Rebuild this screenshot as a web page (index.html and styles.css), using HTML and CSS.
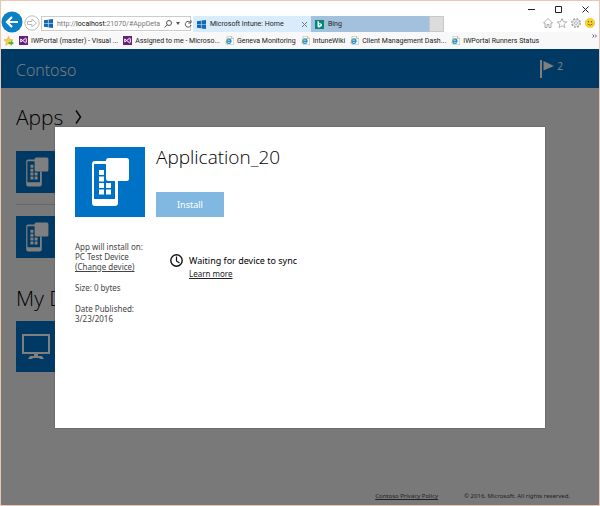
FILE: index.html
```html
<!DOCTYPE html>
<html lang="en">
<head>
<meta charset="utf-8">
<title>Microsoft Intune: Home</title>
<link rel="stylesheet" href="styles.css">
</head>
<body>
<svg class="defs" aria-hidden="true">
  <symbol id="win" viewBox="0 0 16 16"><path fill="#1468b3" d="M0 2.3 7 1.3V7.5H0zM8 1.1 16 0v7.5H8zM0 8.5h7v6.2L0 13.7zM8 8.5h8V16l-8-1.1z"/></symbol>
  <symbol id="vs" viewBox="0 0 18 18"><path fill="#68217a" d="M0 0h18v18H0z"/><path fill="none" stroke="#fff" stroke-width="2" d="M3.500 6v6L13 4.500l1.500.8v7.400l-1.500.8L3.500 6"/></symbol>
  <symbol id="ie" viewBox="0 0 18 18"><path fill="#fff" stroke="#999" d="M4 .5h9l4.500 4.500v12.500H4z"/><path fill="#e8e8e8" stroke="#999" d="M13 .5V5h4.500"/><path fill="none" stroke="#1c97dc" stroke-width="2.600" d="M3.500 10.500h8.500c0-6-8.500-6-8.500 0 0 5.500 6.500 5.500 8 2"/><path fill="none" stroke="#f2bd20" stroke-width="1.500" d="M2 15c-3-3 7-12 11-10"/></symbol>
  <symbol id="phone" viewBox="0 0 70 70"><path fill="#fff" fill-rule="evenodd" d="M20 14h12v3H19v35h21V34h3v22q0 3-3 3H20q-3 0-3-3V17q0-3 3-3z"/><rect x="31" y="11" width="23" height="23" rx="2.500" fill="#fff"/><path fill="#fff" d="M24 23h5v5h-5zM24 29.500h5v5h-5zM24 36h5v5h-5zM31 36h5v5h-5zM24 42.500h5v5h-5zM31 42.500h5v5h-5z"/></symbol>
</svg>

<header class="chrome">
  <div class="toolbar">
    <button class="nav" aria-label="Back"><svg width="22" height="22" viewBox="0 0 22 22"><circle cx="11" cy="11" r="10.500" fill="#0b80c4"/><path d="M17 11H6M11 6l-5 5 5 5" fill="none" stroke="#fff" stroke-width="2.200"/></svg></button>
    <button class="nav" aria-label="Forward"><svg width="16" height="16" viewBox="0 0 16 16"><circle cx="8" cy="8" r="7.200" fill="#fff" stroke="#bbb"/><path d="M3.500 6.500h4.500V4l4.500 4L8 12V9.500H3.500z" fill="none" stroke="#bbb"/></svg></button>
    <div class="address">
      <svg width="9" height="9"><use href="#win"/></svg>
      <span class="url">http://<b>localhost:</b>21070/#AppDeta</span>
      <button class="nav" aria-label="Search"><svg width="8" height="8" viewBox="0 0 8 8"><circle cx="5" cy="3" r="2.500" fill="none" stroke="#555"/><path d="M3.200 4.800.5 7.500" stroke="#555"/></svg></button>
      <button class="nav" aria-label="Show address list"><svg width="4" height="3"><path d="M0 0h4L2 3z" fill="#555"/></svg></button>
      <button class="nav" aria-label="Refresh"><svg width="8" height="8" viewBox="0 0 8 8"><path d="M6.500 2.500A2.900 2.900 0 1 0 7 5M7 .2v2.800H4.300" fill="none" stroke="#555"/></svg></button>
    </div>
    <nav class="tabs">
      <a class="tab active" href="#"><svg width="9" height="9"><use href="#win"/></svg><span>Microsoft Intune: Home</span><svg class="close" width="5" height="5"><path d="M0 0 5 5M5 0 0 5" stroke="#777"/></svg></a>
      <a class="tab" href="#"><svg width="9" height="9" viewBox="0 0 18 18"><path fill="#00897b" d="M0 0h18v18H0z"/><path fill="#fff" d="m5 2 3 1v8l3-1.300-2-1-1-3 6 2.500v3.300L8 15.500l-3-2z"/></svg><span>Bing</span></a>
      <button class="newtab" aria-label="New tab"></button>
    </nav>
    <div class="right">
      <div class="window">
        <button class="nav" aria-label="Minimize"><svg width="7" height="7"><path d="M0 3.500h7" stroke="#222"/></svg></button>
        <button class="nav" aria-label="Maximize"><svg width="7" height="7"><path d="M.5.5h6v6h-6z" fill="none" stroke="#222"/></svg></button>
        <button class="nav" aria-label="Close"><svg width="7" height="7"><path d="M.5.5l6 6M6.500.5l-6 6" stroke="#222"/></svg></button>
      </div>
      <div class="tools">
        <button class="nav" aria-label="Home"><svg width="10" height="10" viewBox="0 0 20 20"><path d="M1 10 10 1l9 9h-3v9h-4v-6H8v6H4v-9z" fill="none" stroke="#999" stroke-width="1.600"/></svg></button>
        <button class="nav" aria-label="Favorites"><svg width="10" height="10" viewBox="0 0 20 20"><path d="m10 1 2.700 6.300 6.800.6-5.100 4.500 1.500 6.700-5.900-3.500-5.900 3.500 1.500-6.700L.5 7.900l6.800-.6z" fill="none" stroke="#999" stroke-width="1.500"/></svg></button>
        <button class="nav" aria-label="Settings"><svg width="10" height="10" viewBox="0 0 20 20"><circle cx="10" cy="10" r="8.500" fill="none" stroke="#999" stroke-width="2.500" stroke-dasharray="4 2.670"/><circle cx="10" cy="10" r="6.500" fill="#fff" stroke="#999"/><circle cx="10" cy="10" r="3" fill="none" stroke="#999" stroke-width="1.500"/></svg></button>
        <button class="nav" aria-label="Feedback"><svg width="10" height="10" viewBox="0 0 20 20"><circle cx="10" cy="10" r="9.500" fill="#fbd32e" stroke="#e3b51c"/><circle cx="7" cy="7.500" r="1.500" fill="#765a12"/><circle cx="13" cy="7.500" r="1.500" fill="#765a12"/><path d="M5 12q5 5 10 0" fill="none" stroke="#765a12" stroke-width="1.500"/></svg></button>
      </div>
    </div>
  </div>
  <nav class="favorites">
    <button class="nav" aria-label="Add to favorites bar"><svg width="10" height="10" viewBox="0 0 20 20"><path d="m9 1 2.700 6 6.300.6-4.800 4.400 1.400 6.500L9 15l-5.600 3.500L4.800 12 0 7.600 6.300 7z" fill="#fbcf4a" stroke="#dc9b20"/><path d="M9 12h5V9l6 5-6 5v-3H9z" fill="#55b430"/></svg></button>
    <a href="#"><svg width="9" height="9"><use href="#vs"/></svg>IWPortal (master) - Visual ...</a>
    <a href="#"><svg width="9" height="9"><use href="#vs"/></svg>Assigned to me - Microso...</a>
    <a href="#"><svg width="9" height="9"><use href="#ie"/></svg>Geneva Monitoring</a>
    <a href="#"><svg width="9" height="9"><use href="#ie"/></svg>IntuneWiki</a>
    <a href="#"><svg width="9" height="9"><use href="#ie"/></svg>Client Management Dash...</a>
    <a href="#"><svg width="9" height="9"><use href="#ie"/></svg>IWPortal Runners Status</a>
    <button class="nav more" aria-label="More favorites"><svg width="5" height="4"><path d="m.5.5 1.500 1.500L.5 3.500M3 .5 4.500 2 3 3.500" fill="none" stroke="#5c5ca0"/></svg></button>
  </nav>
</header>

<div class="site">
  <div class="banner">
    <span class="brand">Contoso</span>
    <a class="flag" href="#" aria-label="2 notifications"><svg width="14" height="18" viewBox="0 0 14 18"><path fill="#fff" d="M0 0h2v18H0zM3.500 1 14 6 3.500 10.500z"/></svg><span>2</span></a>
  </div>
  <main class="content">
    <h1>Apps <svg width="7" height="14" viewBox="0 0 7 14"><path d="m1 .5 4.500 6.500L1 13.500" fill="none" stroke="#111" stroke-width="1.500"/></svg></h1>
    <ul class="apps">
      <li><a class="tile" href="#" aria-label="App"><svg width="42" height="42"><use href="#phone"/></svg></a></li>
      <li><a class="tile" href="#" aria-label="App"><svg width="42" height="42"><use href="#phone"/></svg></a></li>
    </ul>
    <h1>My Devices</h1>
    <a class="tile device" href="#" aria-label="PC Test Device"><svg width="28" height="26" viewBox="0 0 28 26"><path d="M1 1h26v18H1z" fill="none" stroke="#fff" stroke-width="2"/><path fill="#fff" d="M12 20h4v2h4l2 3h-4l-1-1h-6l-1 1H6l2-3h4z"/></svg></a>
  </main>
  <footer class="footer"><a href="#">Contoso Privacy Policy</a><span>© 2016. Microsoft. All rights reserved.</span></footer>

  <div class="overlay">
    <section class="dialog" role="dialog" aria-labelledby="app-name">
      <div class="summary">
        <svg class="logo" width="70" height="70"><use href="#phone"/></svg>
        <p>App will install on:<br>PC Test Device<br><a href="#">(Change device)</a></p>
        <p>Size: 0 bytes</p>
        <p>Date Published:<br>3/23/2016</p>
      </div>
      <div class="detail">
        <h2 id="app-name">Application_20</h2>
        <button class="install">Install</button>
        <div class="status">
          <svg width="13" height="13" viewBox="0 0 13 13"><circle cx="6.500" cy="6.500" r="5.700" fill="none" stroke="#111" stroke-width="1.400"/><path d="M6.500 2.500V7l3 2" fill="none" stroke="#111" stroke-width="1.200"/></svg>
          <div><span class="message">Waiting for device to sync</span><a href="#">Learn more</a></div>
        </div>
      </div>
    </section>
  </div>
</div>
</body>
</html>
```
FILE: styles.css
```css
* { box-sizing: border-box; }
body {
  margin: 0;
  min-height: 100vh;
  display: flex;
  flex-direction: column;
  border: 1px solid #e8c8b4;
  font-family: "Noto Sans", "Open Sans", sans-serif;
  font-size: 8px;
  color: #222;
}
svg { display: block; flex: none; }
.defs { position: absolute; width: 0; height: 0; }
a { color: inherit; }
button { font: inherit; border: 0; padding: 0; background: none; }
h1, h2, p, ul { margin: 0; padding: 0; }
h1, h2, .brand { font-family: "Open Sans", sans-serif; font-weight: 300; }
ul { list-style: none; }
.nav { display: flex; flex: none; }

.chrome { background: #fff; font-family: Roboto, "Open Sans", sans-serif; font-size: 7px; }
.toolbar { display: flex; align-items: flex-end; height: 31px; }
.toolbar > .nav { margin: 0 1px 1px 0; }
.toolbar > .nav:first-child { margin-bottom: -1px; }
.address {
  display: flex;
  align-items: center;
  gap: 4px;
  width: 150px;
  height: 15px;
  margin: 0 2px 1px 0;
  padding: 0 3px 0 2px;
  border: 1px solid #ccc;
  color: #777;
}
.address b { font-weight: 400; color: #111; }
.url { flex: 1; white-space: nowrap; }
.tabs { display: flex; height: 16px; }
.tab {
  display: flex;
  align-items: center;
  gap: 4px;
  width: 118px;
  padding: 0 4px;
  background: #a3c1dc;
  color: #222;
  text-decoration: none;
  white-space: nowrap;
}
.tab.active { background: #d9ecfb; }
.close { margin-left: auto; }
.newtab { width: 15px; background: #dcdcdc; border: 1px solid #c8c8c8; }
.right { margin-left: auto; display: flex; flex-direction: column; align-items: flex-end; gap: 5px; padding: 0 4px 4px 0; }
.window { display: flex; gap: 20px; padding-right: 6px; }
.tools { display: flex; gap: 4px; }
.favorites {
  display: flex;
  align-items: center;
  gap: 5px;
  height: 17px;
  padding: 0 2px 0 3px;
  background: #f8f8f8;
}
.favorites a { display: flex; align-items: center; gap: 3px; text-decoration: none; white-space: nowrap; }
.more { margin-left: auto; align-self: flex-start; margin-top: 2px; }

.site { position: relative; flex: 1; display: flex; flex-direction: column; background: #f3f3f3; }
.banner { display: flex; justify-content: space-between; height: 39px; padding: 0 36px 0 15px; background: #0072c6; color: #fff; }
.brand { font-size: 16px; line-height: 42px; }
.flag { display: flex; gap: 3px; padding-top: 11px; font-size: 10px; line-height: 12px; text-decoration: none; }
.content { flex: 1; padding: 15px; }
h1 { display: flex; align-items: center; gap: 12px; font-size: 21px; line-height: 28px; color: #000; }
.apps { width: 50%; padding: 20px 0 26px; }
.apps li + li { margin-top: 11px; padding-top: 11px; border-top: 1px solid #ccc; }
.tile { display: flex; align-items: center; justify-content: center; width: 42px; height: 42px; background: #0072c6; }
.tile.device { width: 51px; height: 51px; margin-top: 9px; padding-right: 12px; }
.footer { display: flex; justify-content: flex-end; gap: 26px; padding: 0 29px 4px 0; font-size: 6px; line-height: 10px; color: #444; }

.overlay { position: absolute; inset: 0; padding: 78px 54px 77px; background: rgba(0, 0, 0, 0.5); }
.dialog { display: flex; gap: 10px; height: 100%; padding: 20px; background: #fff; box-shadow: 0 0 1px #333; }
.summary { width: 71px; white-space: nowrap; line-height: 10px; color: #444; }
.summary p { margin-bottom: 11px; }
.logo { margin-bottom: 25px; background: #0072c6; }
h2 { font-size: 19px; line-height: 20px; color: #000; }
.install { width: 68px; height: 25px; margin-top: 25px; background: #80b8e2; color: #fff; font-size: 9px; }
.status { display: flex; gap: 6px; margin: 37px 0 0 14px; }
.message { display: block; font-size: 9px; line-height: 13px; color: #000; }
.status a { line-height: 13px; }
```
